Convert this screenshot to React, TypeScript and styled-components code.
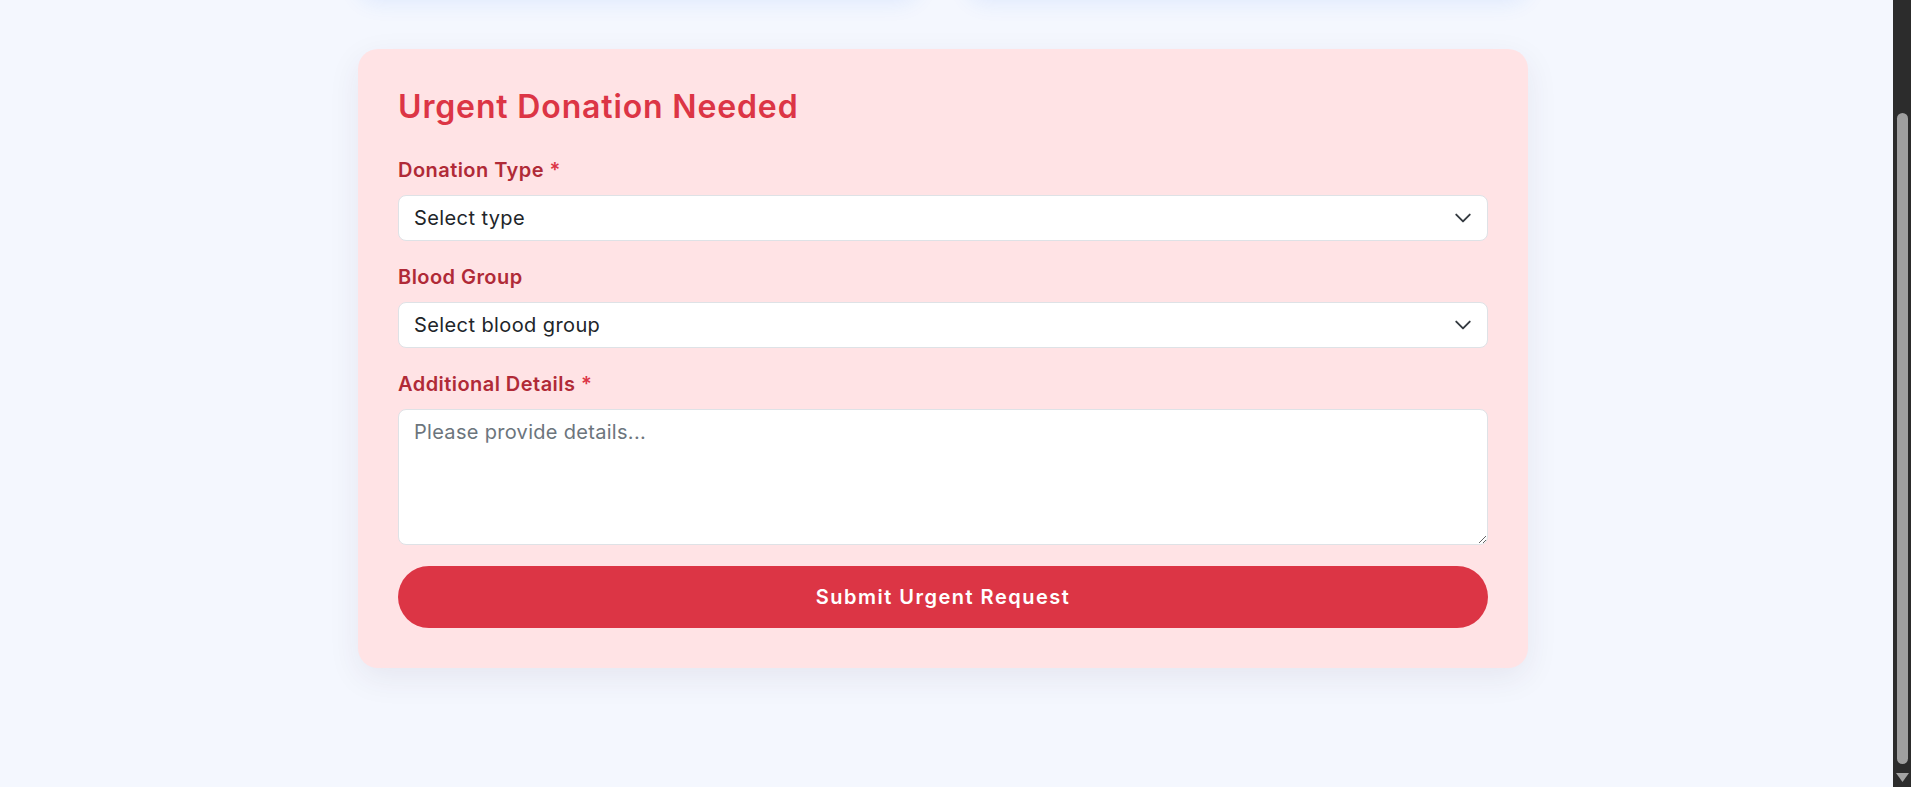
import React from "react";
import styled, { createGlobalStyle } from "styled-components";

const GlobalStyle = createGlobalStyle`
  html, body {
    margin: 0;
    padding: 0;
    background: #f4f7fe;
    overflow: hidden;
  }
  * { box-sizing: border-box; }
  body {
    font-family: Inter, "Open Sans", "Noto Sans", sans-serif;
    color: #212529;
  }
`;

const Viewport = styled.div`
  display: flex;
  height: 787px;
  width: 100%;
  overflow: hidden;
`;

const Main = styled.main`
  flex: 1;
  overflow: hidden;
  padding-right: 7px;
`;

const Container = styled.div`
  width: 1170px;
  margin: 0 auto;
`;

const InfoRow = styled.div`
  display: grid;
  grid-template-columns: 1fr 1fr;
  gap: 48px;
  height: 198px;
  margin-top: -200px;
  margin-bottom: 51px;
`;

const InfoCard = styled.div`
  background: #ffffff;
  border-radius: 20px;
  box-shadow: 0 4px 22px rgba(30, 110, 250, 0.1);
`;

const Card = styled.section`
  background: #ffe3e5;
  border-radius: 20px;
  padding: 38.7px 40px 40.5px;
  box-shadow: 0 10px 32px rgba(60, 40, 80, 0.08);
`;

const Title = styled.h2`
  margin: 0 0 29px;
  font-size: 32px;
  line-height: 38px;
  font-weight: 600;
  color: #dc3545;
  letter-spacing: 0.85px;
`;

const Field = styled.div`
  margin-bottom: 21px;
`;

const Label = styled.label`
  display: block;
  margin-bottom: 10px;
  font-size: 20px;
  line-height: 30px;
  font-weight: 600;
  color: #b02a37;
  letter-spacing: 0.45px;
`;

const Required = styled.span`
  color: #dc3545;
`;

const SelectWrap = styled.div`
  position: relative;
`;

const Select = styled.select`
  display: block;
  width: 100%;
  height: 46px;
  padding: 0 45px 0 15px;
  font-family: inherit;
  font-size: 20px;
  line-height: 30px;
  letter-spacing: 0.4px;
  color: #212529;
  background: #ffffff;
  border: 1px solid #dee2e6;
  border-radius: 8px;
  appearance: none;
  -webkit-appearance: none;
  outline: none;
`;

const Chevron = styled.svg`
  position: absolute;
  right: 16px;
  top: 50%;
  width: 18px;
  height: 18px;
  margin-top: -9px;
  pointer-events: none;
`;

const TextArea = styled.textarea`
  display: block;
  width: 100%;
  height: 136px;
  padding: 7px 15px;
  font-family: inherit;
  font-size: 20px;
  line-height: 30px;
  letter-spacing: 0.3px;
  color: #212529;
  background: #ffffff;
  border: 1px solid #dee2e6;
  border-radius: 8px;
  outline: none;
  &::placeholder {
    color: #6c757d;
  }
`;

const SubmitButton = styled.button`
  display: block;
  width: 100%;
  height: 62px;
  margin-top: 20px;
  border: none;
  border-radius: 40px;
  background: #dc3545;
  color: #ffffff;
  font-family: inherit;
  font-size: 20px;
  font-weight: 600;
  letter-spacing: 1.5px;
  cursor: pointer;
`;

const ScrollTrack = styled.div`
  width: 18px;
  flex: none;
  background: #2c2c2c;
  display: flex;
  flex-direction: column;
  align-items: center;
  padding-top: 113px;
  padding-bottom: 5px;
`;

const ScrollThumb = styled.div`
  width: 11px;
  height: 651px;
  margin-left: 1px;
  border-radius: 6px;
  background: #9f9f9f;
`;

const ScrollArrow = styled.svg`
  margin-top: 9px;
  width: 13px;
  height: 9px;
`;

const ChevronIcon = () => (
  <Chevron viewBox="0 0 16 16" fill="none">
    <path
      d="m2 5 6 6 6-6"
      stroke="#343a40"
      strokeWidth="1.7"
      strokeLinecap="round"
      strokeLinejoin="round"
    />
  </Chevron>
);

export default function App() {
  return (
    <>
      <GlobalStyle />
      <Viewport>
        <Main>
          <Container>
            <InfoRow>
              <InfoCard />
              <InfoCard />
            </InfoRow>
            <Card>
              <Title>Urgent Donation Needed</Title>
              <form onSubmit={(e) => e.preventDefault()}>
                <Field>
                  <Label htmlFor="donationType">
                    Donation Type <Required>*</Required>
                  </Label>
                  <SelectWrap>
                    <Select id="donationType" defaultValue="">
                      <option value="">Select type</option>
                      <option value="blood">Blood</option>
                      <option value="plasma">Plasma</option>
                      <option value="platelets">Platelets</option>
                    </Select>
                    <ChevronIcon />
                  </SelectWrap>
                </Field>
                <Field>
                  <Label htmlFor="bloodGroup">Blood Group</Label>
                  <SelectWrap>
                    <Select id="bloodGroup" defaultValue="">
                      <option value="">Select blood group</option>
                      <option>A+</option>
                      <option>A-</option>
                      <option>B+</option>
                      <option>B-</option>
                      <option>AB+</option>
                      <option>AB-</option>
                      <option>O+</option>
                      <option>O-</option>
                    </Select>
                    <ChevronIcon />
                  </SelectWrap>
                </Field>
                <Field>
                  <Label htmlFor="details">
                    Additional Details <Required>*</Required>
                  </Label>
                  <TextArea id="details" placeholder="Please provide details..." />
                </Field>
                <SubmitButton type="submit">Submit Urgent Request</SubmitButton>
              </form>
            </Card>
          </Container>
        </Main>
        <ScrollTrack>
          <ScrollThumb />
          <ScrollArrow viewBox="0 0 13 9">
            <polygon points="0,0 13,0 6.5,9" fill="#a3a3a3" />
          </ScrollArrow>
        </ScrollTrack>
      </Viewport>
    </>
  );
}
